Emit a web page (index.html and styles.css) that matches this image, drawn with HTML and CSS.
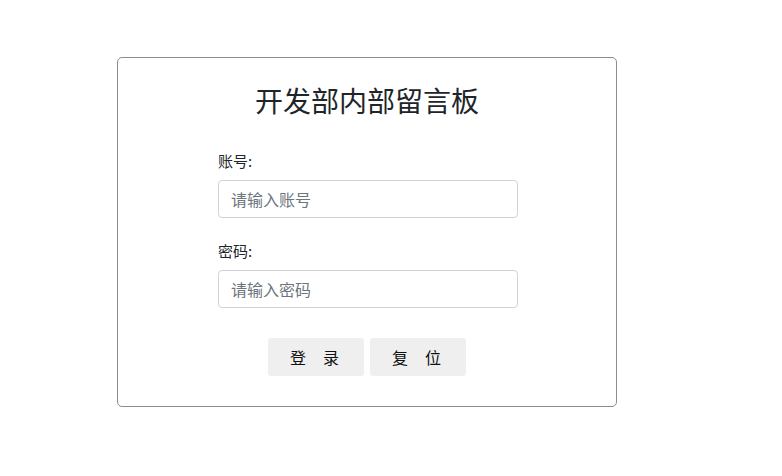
FILE: index.html
```html
<!DOCTYPE html>
<html lang="zh">
<head>
<meta charset="utf-8">
<title>开发部内部留言板</title>
<link rel="stylesheet" href="styles.css">
</head>
<body>
<div class="page">
  <div class="card">
    <h2 class="title">开发部内部留言板</h2>
    <form class="form">
      <div class="group">
        <label class="label" for="user">账号:</label>
        <input class="control" id="user" type="text" placeholder="请输入账号">
      </div>
      <div class="group">
        <label class="label" for="pwd">密码:</label>
        <input class="control" id="pwd" type="password" placeholder="请输入密码">
      </div>
      <div class="actions">
        <button class="btn" type="submit"><span>登</span><span>录</span></button>
        <button class="btn" type="reset"><span>复</span><span>位</span></button>
      </div>
    </form>
  </div>
</div>
</body>
</html>
```

FILE: styles.css
```css
* { box-sizing: border-box; }
html, body {
  margin: 0;
  padding: 0;
  background: #fff;
}
body {
  font-family: "Noto Sans CJK SC", "Noto Sans", "Liberation Sans", sans-serif;
  color: #212529;
  font-size: 16px;
}
.page {
  padding: 57px 0 0 117px;
}
.card {
  width: 500px;
  height: 350px;
  border: 1px solid #8c8c8c;
  border-radius: 5px;
  padding-top: 26px;
}
.title {
  margin: 0;
  font-size: 28px;
  font-weight: 400;
  line-height: 1.2;
  text-align: center;
  color: #212529;
}
.form {
  width: 300px;
  margin: 34px 0 0 100px;
}
.group {
  display: flex;
  flex-direction: column;
  margin-bottom: 24px;
}
.label {
  font-size: 15px;
  line-height: 18px;
  margin-bottom: 10px;
}
.control {
  width: 300px;
  height: 38px;
  padding: 6px 12px;
  font-family: inherit;
  font-size: 16px;
  line-height: 1.5;
  color: #495057;
  border: 1px solid #ced4da;
  border-radius: 4px;
  outline: none;
}
.control::placeholder {
  color: #6c757d;
}
.actions {
  display: flex;
  justify-content: center;
  gap: 6px;
  margin-top: 30px;
  margin-left: -2px;
}
.btn {
  width: 96px;
  height: 38px;
  display: flex;
  align-items: center;
  justify-content: center;
  gap: 17px;
  border: none;
  border-radius: 3px;
  background: #efefef;
  color: #111;
  font-family: inherit;
  font-size: 16px;
  padding: 0 3px 0 0;
}
```
